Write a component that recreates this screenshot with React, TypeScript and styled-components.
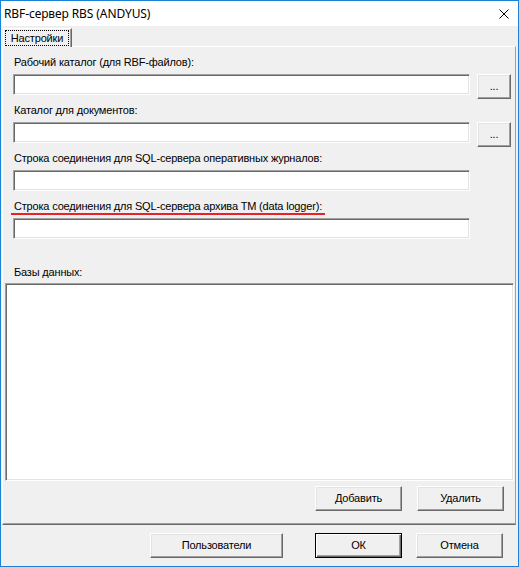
import React from 'react';
import styled, { createGlobalStyle, css } from 'styled-components';

const GlobalStyle = createGlobalStyle`
  html, body {
    margin: 0;
    padding: 0;
    background: #f0f0f0;
  }
  body {
    font-family: "Liberation Sans", Arial, sans-serif;
    font-size: 11px;
    letter-spacing: -0.18px;
    color: #000;
  }
  * {
    box-sizing: border-box;
  }
`;

const raised = css`
  background: #f0f0f0;
  border: 1px solid;
  border-color: #fff #696969 #696969 #fff;
  box-shadow: inset -1px -1px #a0a0a0, inset 1px 1px #e3e3e3;
`;

const sunken = css`
  background: #fff;
  border: 1px solid;
  border-color: #a0a0a0 #fff #fff #a0a0a0;
  box-shadow: inset 1px 1px #696969, inset -1px -1px #e3e3e3;
`;

const Window = styled.div`
  width: 519px;
  height: 567px;
  border: 1px solid #1883d7;
  background: #f0f0f0;
  display: flex;
  flex-direction: column;
`;

const TitleBar = styled.div`
  height: 25px;
  flex-shrink: 0;
  background: #fff;
  display: flex;
  align-items: center;
  justify-content: space-between;
  padding: 0 9px 0 3px;
`;

const Title = styled.span`
  font-family: "Noto Sans", "Liberation Sans", sans-serif;
  font-size: 12px;
  letter-spacing: -0.1px;
  color: #000;
`;

const CloseIcon = styled.svg`
  width: 10px;
  height: 10px;
  display: block;
`;

const TabStrip = styled.div`
  height: 20px;
  flex-shrink: 0;
  display: flex;
  align-items: flex-start;
  padding: 2px 0 0 2px;
  position: relative;
  z-index: 1;
`;

const Tab = styled.div`
  width: 69px;
  height: 19px;
  background: #f0f0f0;
  border-top: 1px solid #fff;
  border-left: 1px solid #fff;
  border-right: 1px solid #696969;
  box-shadow: inset -1px 0 #a0a0a0;
  padding: 1px 2px 1px 1px;
  display: flex;
`;

const TabFocus = styled.span`
  flex: 1;
  border: 1px dotted #000;
  display: flex;
  align-items: center;
  justify-content: center;
  line-height: 13px;
`;

const Panel = styled.div`
  flex: 1;
  margin: 0 2px 0 1px;
  border-top: 1px solid #fff;
  border-left: 1px solid #fff;
  border-right: 1px solid #a0a0a0;
  border-bottom: 1px solid #696969;
  box-shadow: inset 0 -1px #a0a0a0;
  padding: 9px 0 13px 0;
  display: flex;
  flex-direction: column;
`;

const Field = styled.div`
  display: flex;
  flex-direction: column;
  align-items: flex-start;
  padding-left: 10px;
  margin-bottom: 9px;
`;

const Label = styled.label<{ $marked?: boolean }>`
  position: relative;
  line-height: 13px;
  margin-bottom: 5px;
  padding-left: 1px;
  white-space: nowrap;

  ${({ $marked }) =>
    $marked &&
    css`
      &::after {
        content: '';
        position: absolute;
        left: -2px;
        right: -3px;
        bottom: -2px;
        height: 2px;
        background: #e8212b;
      }
    `}
`;

const InputRow = styled.div`
  display: flex;
  align-items: flex-start;
  gap: 7px;
  height: 21px;
`;

const TextBox = styled.input`
  ${sunken};
  width: 457px;
  height: 21px;
  margin: 0;
  padding: 0 3px;
  font: inherit;
  outline: none;
`;

const Button = styled.button<{ $w: number; $default?: boolean }>`
  ${raised};
  width: ${({ $w }) => $w}px;
  height: 25px;
  margin: 0;
  padding: 0;
  font: inherit;
  letter-spacing: inherit;
  color: #000;
  line-height: 13px;
  flex-shrink: 0;

  ${({ $default }) =>
    $default &&
    css`
      border: 1px solid #000;
      box-shadow: inset 1px 1px #fff, inset -1px -1px #696969, inset -2px -2px #a0a0a0;
    `}
`;

const DbLabel = styled.div`
  line-height: 13px;
  padding-left: 11px;
  margin: 18px 0 4px;
`;

const ListBox = styled.div`
  ${sunken};
  flex: 1;
  margin: 0 1px 0 2px;
`;

const PanelButtons = styled.div`
  display: flex;
  justify-content: flex-end;
  gap: 15px;
  margin-top: 5px;
  padding-right: 11px;
`;

const Footer = styled.div`
  height: 41px;
  flex-shrink: 0;
  display: flex;
  justify-content: flex-end;
  align-items: flex-start;
  padding: 8px 15px 0 0;
`;

const FooterGroup = styled.div`
  display: flex;
  gap: 14px;
  margin-left: 32px;
`;

const fields = [
  { label: 'Рабочий каталог (для RBF-файлов):', browse: true },
  { label: 'Каталог для документов:', browse: true },
  { label: 'Строка соединения для SQL-сервера оперативных журналов:', browse: false },
  { label: 'Строка соединения для SQL-сервера архива ТМ (data logger):', browse: false, marked: true },
];

export default function App() {
  return (
    <>
      <GlobalStyle />
      <Window>
        <TitleBar>
          <Title>RBF-сервер RBS (ANDYUS)</Title>
          <CloseIcon viewBox="0 0 10 10">
            <path d="M0.5 0.5 L9.5 9.5 M9.5 0.5 L0.5 9.5" stroke="#000" strokeWidth="1" fill="none" />
          </CloseIcon>
        </TitleBar>

        <TabStrip>
          <Tab>
            <TabFocus>Настройки</TabFocus>
          </Tab>
        </TabStrip>

        <Panel>
          {fields.map((f) => (
            <Field key={f.label}>
              <Label $marked={f.marked}>{f.label}</Label>
              <InputRow>
                <TextBox type="text" />
                {f.browse && <Button $w={34}>...</Button>}
              </InputRow>
            </Field>
          ))}

          <DbLabel>Базы данных:</DbLabel>
          <ListBox />

          <PanelButtons>
            <Button $w={87}>Добавить</Button>
            <Button $w={87}>Удалить</Button>
          </PanelButtons>
        </Panel>

        <Footer>
          <Button $w={133}>Пользователи</Button>
          <FooterGroup>
            <Button $w={87} $default>
              ОК
            </Button>
            <Button $w={87}>Отмена</Button>
          </FooterGroup>
        </Footer>
      </Window>
    </>
  );
}
